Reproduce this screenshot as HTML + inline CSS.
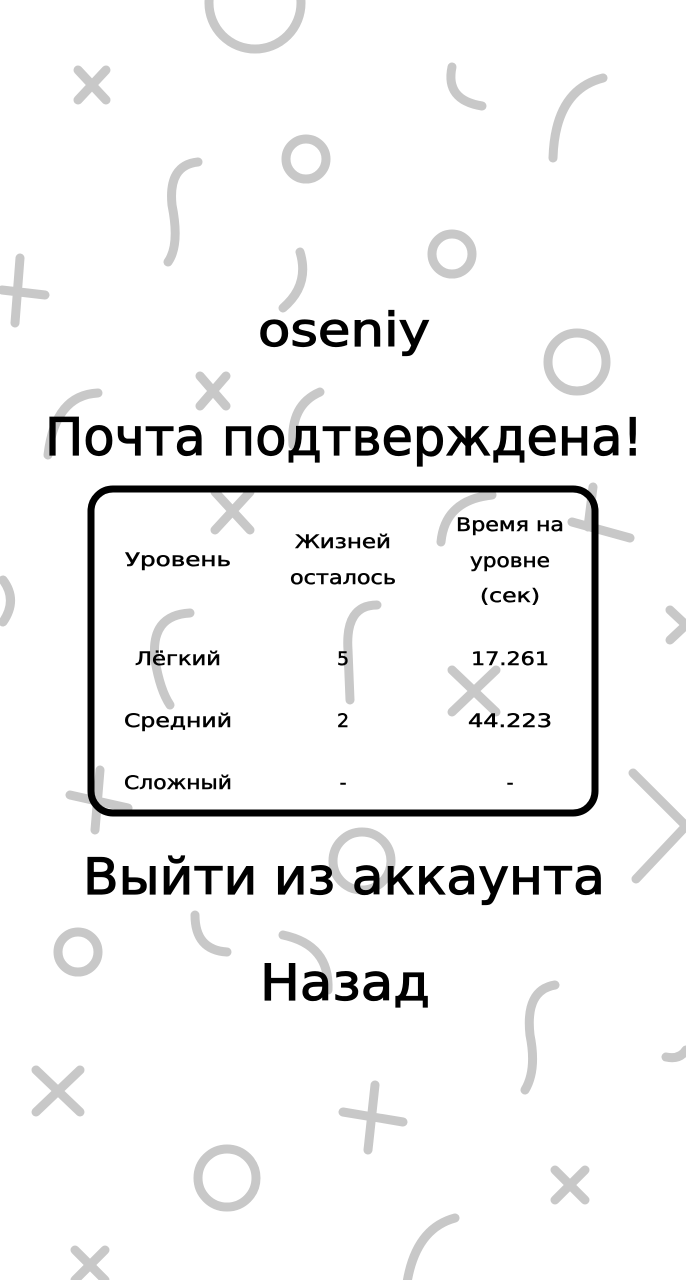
<!DOCTYPE html>
<html><head><meta charset="utf-8"><style>
html,body{margin:0;padding:0;background:#fff;}
svg{display:block;}
text{font-family:"DejaVu Sans","Liberation Sans",sans-serif;fill:#000;stroke:#000;stroke-width:1.2;}
g.t text{stroke-width:0.5;}
</style></head><body>
<svg width="686" height="1280" viewBox="0 0 686 1280" xmlns="http://www.w3.org/2000/svg">
<g fill="none" stroke="#c8c8c8" stroke-width="9" stroke-linecap="round">
<circle cx="255" cy="3" r="46"/>
<path d="M78 70 L106 100 M106 70 L78 100"/>
<path d="M452 67 Q445 100 482 106"/>
<path d="M603 78 Q555 90 553 158"/>
<circle cx="306" cy="159" r="20"/>
<path d="M198 162 Q168 165 172 205 Q180 245 168 262"/>
<circle cx="452" cy="254" r="20"/>
<path d="M300 252 Q310 285 283 308"/>
<path d="M20 258 L15 323 M2 290 L45 295"/>
<circle cx="577" cy="362" r="29"/>
<path d="M200 376 L226 406 M226 376 L200 406"/>
<path d="M98 393 Q55 395 48 455"/>
<path d="M320 392 Q290 405 293 445"/>
<path d="M215 492 L250 530 M250 492 L215 530"/>
<path d="M492 495 Q445 500 441 542"/>
<path d="M593 487 L588 527 M572 522 L630 538"/>
<path d="M3 580 Q18 600 3 622"/>
<path d="M190 613 Q150 615 155 660 Q160 690 170 705"/>
<path d="M377 605 Q345 605 348 650 L350 700"/>
<path d="M670 610 L686 625 M670 640 L686 625"/>
<path d="M452 670 L496 712 M496 670 L452 712"/>
<path d="M100 770 L95 830 M70 795 L128 808"/>
<path d="M633 773 L686 826 L636 879"/>
<circle cx="362" cy="861" r="29"/>
<circle cx="78" cy="952" r="20"/>
<path d="M195 915 Q195 950 227 952"/>
<path d="M283 935 Q330 945 328 990"/>
<path d="M555 985 Q525 990 530 1035 Q537 1070 525 1090"/>
<path d="M666 1057 Q680 1060 686 1050"/>
<path d="M36 1070 L80 1112 M80 1070 L36 1112"/>
<path d="M375 1085 L368 1150 M343 1112 L403 1122"/>
<circle cx="227" cy="1178" r="29"/>
<path d="M455 1218 Q410 1230 405 1300"/>
<path d="M555 1170 L585 1200 M585 1170 L555 1200"/>
<path d="M75 1250 L105 1280 M105 1250 L75 1280"/>
</g>
<rect x="91" y="489" width="504" height="324" rx="22" fill="none" stroke="#000" stroke-width="7"/>
<text x="344" y="346" font-size="46" text-anchor="middle" textLength="172" lengthAdjust="spacingAndGlyphs">oseniy</text>
<text x="344" y="455" font-size="52" text-anchor="middle" textLength="598" lengthAdjust="spacingAndGlyphs">Почта подтверждена!</text>
<g class="t" font-size="19" text-anchor="middle">
<text x="178" y="566" textLength="106" lengthAdjust="spacingAndGlyphs">Уровень</text>
<text x="343" y="548" textLength="96" lengthAdjust="spacingAndGlyphs">Жизней</text>
<text x="343" y="584" textLength="106" lengthAdjust="spacingAndGlyphs">осталось</text>
<text x="510" y="531" textLength="108" lengthAdjust="spacingAndGlyphs">Время на</text>
<text x="510" y="567" textLength="80" lengthAdjust="spacingAndGlyphs">уровне</text>
<text x="510" y="602" textLength="60" lengthAdjust="spacingAndGlyphs">(сек)</text>
<text x="178" y="665" textLength="86" lengthAdjust="spacingAndGlyphs">Лёгкий</text>
<text x="343" y="665">5</text>
<text x="510" y="665" textLength="78" lengthAdjust="spacingAndGlyphs">17.261</text>
<text x="178" y="727" textLength="108" lengthAdjust="spacingAndGlyphs">Средний</text>
<text x="343" y="727">2</text>
<text x="510" y="727" textLength="84" lengthAdjust="spacingAndGlyphs">44.223</text>
<text x="178" y="789" textLength="108" lengthAdjust="spacingAndGlyphs">Сложный</text>
<text x="343" y="789">-</text>
<text x="510" y="789">-</text>
</g>
<text x="344" y="894" font-size="50" text-anchor="middle" textLength="522" lengthAdjust="spacingAndGlyphs">Выйти из аккаунта</text>
<text x="345" y="1000" font-size="50" text-anchor="middle" textLength="170" lengthAdjust="spacingAndGlyphs">Назад</text>
</svg>
</body></html>
